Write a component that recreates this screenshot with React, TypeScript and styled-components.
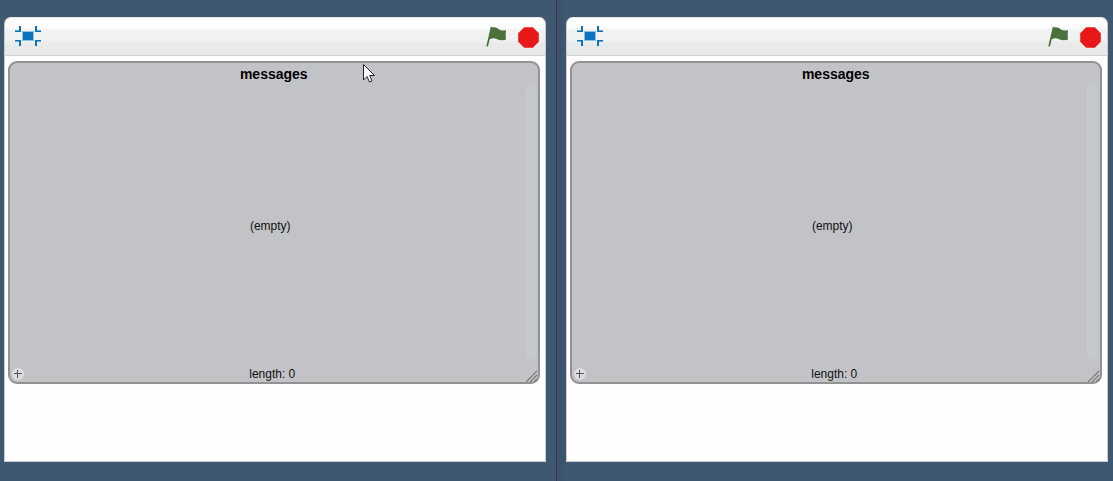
import React from "react";
import styled, { createGlobalStyle } from "styled-components";

const GlobalStyle = createGlobalStyle`
  * { box-sizing: border-box; }
  body {
    margin: 0;
    background: #3f5872;
    font-family: "Liberation Sans", Arial, sans-serif;
    color: #111;
  }
`;

const Page = styled.main`
  display: grid;
  grid-template-columns: calc(50% - 1px) 1fr;
  min-height: 100vh;
`;

const Pane = styled.section<{ $divided?: boolean }>`
  display: flex;
  padding: ${(p) => (p.$divided ? "17px 5px 19px 9px" : "17px 10px 19px 4px")};
  border-left: ${(p) => (p.$divided ? "1px solid #343638" : "none")};
  background: ${(p) =>
    p.$divided ? "linear-gradient(90deg, #394f6b 0, #3f5872 10px)" : "#3f5872"};
`;

const Player = styled.div`
  flex: 1;
  display: flex;
  flex-direction: column;
  background: #fefefe;
  border: 1px solid #c9cdd1;
  border-top-color: #e6e9ec;
  border-radius: 7px 7px 0 0;
`;

const Header = styled.header`
  display: flex;
  align-items: center;
  gap: 11px;
  height: 38px;
  padding: 0 6px 0 10px;
  border-bottom: 1px solid #cfcfcf;
  border-radius: 6px 6px 0 0;
  background: linear-gradient(#fff 0, #fdfdfd 10px, #f2f4f3 11px, #f0f2f1 22px, #e9ebea 26px, #e7e8e8 100%);
`;

const IconButton = styled.button<{ $pushed?: boolean }>`
  display: flex;
  padding: 0;
  border: 0;
  background: none;
  margin-right: ${(p) => (p.$pushed ? "auto" : "0")};
`;

const List = styled.section`
  margin: 5px 5px 0 3px;
  border: 2px solid #929292;
  border-radius: 9px;
  background: #c2c3c7;
`;

const Title = styled.h2`
  margin: 0;
  height: 21px;
  font-size: 14px;
  line-height: 23px;
  text-align: center;
  color: #000;
`;

const Body = styled.div`
  display: flex;
  min-height: 275px;
  padding-right: 1px;
`;

const Empty = styled.p`
  flex: 1;
  display: flex;
  align-items: center;
  justify-content: center;
  margin: 0;
  padding: 9px 0 0 6px;
  font-size: 12px;
`;

const Track = styled.div`
  width: 12px;
  border-radius: 5px;
  background: #c5c9cc;
`;

const Footer = styled.footer`
  display: flex;
  align-items: center;
  height: 23px;
  padding: 6px 0 0 2px;
`;

const AddButton = styled.button`
  display: flex;
  padding: 0;
  border: 0;
  border-radius: 50%;
  background: #dddddf;
`;

const Length = styled.span`
  flex: 1;
  padding-right: 4px;
  font-size: 12px;
  line-height: 16px;
  text-align: center;
`;

const Grip = styled.svg`
  display: block;
  align-self: flex-end;
`;

const Cursor = styled.svg`
  position: absolute;
  left: 363px;
  top: 63px;
  pointer-events: none;
`;

function ScreenIcon() {
  return (
    <svg width="26" height="21" viewBox="0 0 26 21" shapeRendering="crispEdges">
      <rect x="7" y="5" width="12" height="10" fill="#8fbfe2" />
      <rect x="8" y="6" width="10" height="8" fill="#0e73be" />
      <path
        d="M0 5h4V0h2v6H0zM20 0h2v5h4v1h-6zM0 14h6v6H4v-5H0zM20 14h6v1h-4v5h-2z"
        fill="#0e73be"
      />
      <path d="M0 4h4v1H0zM22 4h4v1h-4zM0 15h4v1H0zM22 15h4v1h-4z" fill="#65a8d8" />
    </svg>
  );
}

function FlagIcon() {
  return (
    <svg width="21" height="21" viewBox="0 0 21 21">
      <path
        d="M4.900 0.200L6 1.500C9 1 11 1.900 13 3.500C15 4.800 17.500 4.800 20 4C19.600 7 19.600 10.500 20 13.500C17 14.600 13.800 14.500 11.200 13.300C8.800 12 6.500 12 3.800 13.200L1.900 20.600L0.300 20.200Z"
        fill="#4a703b"
      />
    </svg>
  );
}

function StopIcon() {
  return (
    <svg width="21" height="23" viewBox="0 -2 21 23">
      <path
        d="M6.200 0.300H14.800L20.800 6.200V14.800L14.800 20.700H6.200L0.200 14.800V6.200Z"
        fill="#e91818"
      />
    </svg>
  );
}

function Stage() {
  return (
    <Player>
      <Header>
        <IconButton $pushed aria-label="Full screen">
          <ScreenIcon />
        </IconButton>
        <IconButton aria-label="Start">
          <FlagIcon />
        </IconButton>
        <IconButton aria-label="Stop">
          <StopIcon />
        </IconButton>
      </Header>
      <List>
        <Title>messages</Title>
        <Body>
          <Empty>(empty)</Empty>
          <Track />
        </Body>
        <Footer>
          <AddButton aria-label="Add item">
            <svg width="12" height="12" viewBox="0 0 12 12" shapeRendering="crispEdges">
              <path d="M2 5h8v1H2zM5 2h1v8H5z" fill="#555" />
            </svg>
          </AddButton>
          <Length>length: 0</Length>
          <Grip width="13" height="13" viewBox="0 0 13 13">
            <path d="M1 13L12 2M5 13L12 6M9 13L12 10" stroke="#7c7c7e" strokeWidth="1.200" />
          </Grip>
        </Footer>
      </List>
    </Player>
  );
}

export default function App() {
  return (
    <>
      <GlobalStyle />
      <Page>
        <Pane>
          <Stage />
        </Pane>
        <Pane $divided>
          <Stage />
        </Pane>
      </Page>
      <Cursor width="13" height="20" viewBox="0 0 13 20" aria-hidden="true">
        <path
          d="M0.500 1.500V17L4 13.500L6.500 19L9 18L6.700 12.500H11.500Z"
          fill="#fff"
          stroke="#23232f"
        />
      </Cursor>
    </>
  );
}
